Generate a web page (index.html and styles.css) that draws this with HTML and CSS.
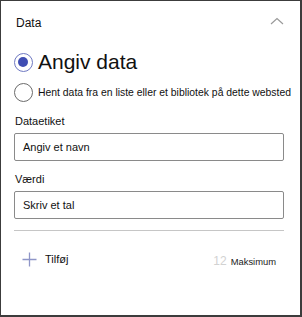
FILE: index.html
```html
<!DOCTYPE html>
<html lang="da">
<head>
    <meta charset="UTF-8">
    <meta name="viewport" content="width=device-width, initial-scale=1.0">
    <title>Data</title>
    <link rel="stylesheet" href="styles.css">
</head>
<body>
    <div class="panel">
        <div class="panel-header">
            <span class="panel-title">Data</span>
            <svg class="chevron" width="14" height="8" viewBox="0 0 14 8">
                <polyline points="1,7 7,1.5 13,7" fill="none" stroke="#9a9a9a" stroke-width="1.2"/>
            </svg>
        </div>

        <div class="choices">
            <label class="choice choice-big">
                <span class="radio checked"></span>
                <span class="choice-text">Angiv data</span>
            </label>
            <label class="choice">
                <span class="radio"></span>
                <span class="choice-text">Hent data fra en liste eller et bibliotek på dette websted</span>
            </label>
        </div>

        <div class="field">
            <div class="field-label">Dataetiket</div>
            <div class="field-input">Angiv et navn</div>
        </div>

        <div class="field">
            <div class="field-label">Værdi</div>
            <div class="field-input">Skriv et tal</div>
        </div>

        <div class="divider"></div>

        <div class="add-row">
            <div class="add-button">
                <svg class="plus" width="15" height="15" viewBox="0 0 15 15">
                    <path d="M7.5 0.5 V14.5 M0.5 7.5 H14.5" stroke="#8f96c8" stroke-width="1.3" fill="none"/>
                </svg>
                <span>Tilføj</span>
            </div>
            <div class="limit">
                <span class="limit-count">12</span>
                <span class="limit-label">Maksimum</span>
            </div>
        </div>
    </div>
</body>
</html>
```

FILE: styles.css
```css
* {
    margin: 0;
    padding: 0;
    box-sizing: border-box;
}

body {
    font-family: 'Liberation Sans', Arial, sans-serif;
    background: #fff;
    color: #111;
}

.panel {
    width: 302px;
    height: 317px;
    border: 1px solid #3c3c3c;
    border-right-width: 2px;
    border-bottom-width: 2px;
    padding: 14px 16px 0 13px;
}

.panel-header {
    display: flex;
    align-items: center;
    justify-content: space-between;
    height: 16px;
    padding-left: 2px;
}

.panel-title {
    font-size: 12px;
    line-height: 16px;
}

.chevron {
    display: block;
    margin-top: -4px;
}

.choices {
    margin-top: 21px;
}

.choice {
    display: flex;
    align-items: center;
    gap: 5px;
    height: 20px;
}

.choice + .choice {
    margin-top: 10px;
}

.radio {
    width: 19px;
    height: 19px;
    border: 1.5px solid #6b6b6b;
    border-radius: 50%;
    flex-shrink: 0;
    position: relative;
}

.radio.checked {
    border-color: #6f79c2;
}

.radio.checked::after {
    content: '';
    position: absolute;
    top: 3px;
    left: 3px;
    width: 10px;
    height: 10px;
    border-radius: 50%;
    background: #3f4db3;
}

.choice-text {
    font-size: 10.4px;
    white-space: nowrap;
}

.choice-big .choice-text {
    font-size: 21px;
    line-height: 20px;
}

.field {
    margin-top: 12px;
}

.field + .field {
    margin-top: 11px;
}

.field-label {
    font-size: 11px;
    line-height: 14px;
    padding-left: 1px;
}

.field-input {
    margin-top: 5px;
    height: 28px;
    border: 1px solid #8a8a8a;
    border-radius: 2px;
    padding-left: 8px;
    font-size: 11px;
    line-height: 26px;
}

.divider {
    margin-top: 11px;
    height: 1px;
    background: #c6c6c6;
}

.add-row {
    display: flex;
    align-items: center;
    justify-content: space-between;
    height: 16px;
    margin-top: 20px;
    padding-left: 8px;
    padding-right: 8px;
}

.add-button {
    display: flex;
    align-items: center;
    gap: 8px;
    font-size: 11px;
}

.plus {
    display: block;
}

.limit {
    display: flex;
    align-items: baseline;
    gap: 4px;
    margin-top: 4px;
}

.limit-count {
    font-size: 12px;
    color: #d2d2d2;
}

.limit-label {
    font-size: 9.4px;
    color: #222;
}
```
